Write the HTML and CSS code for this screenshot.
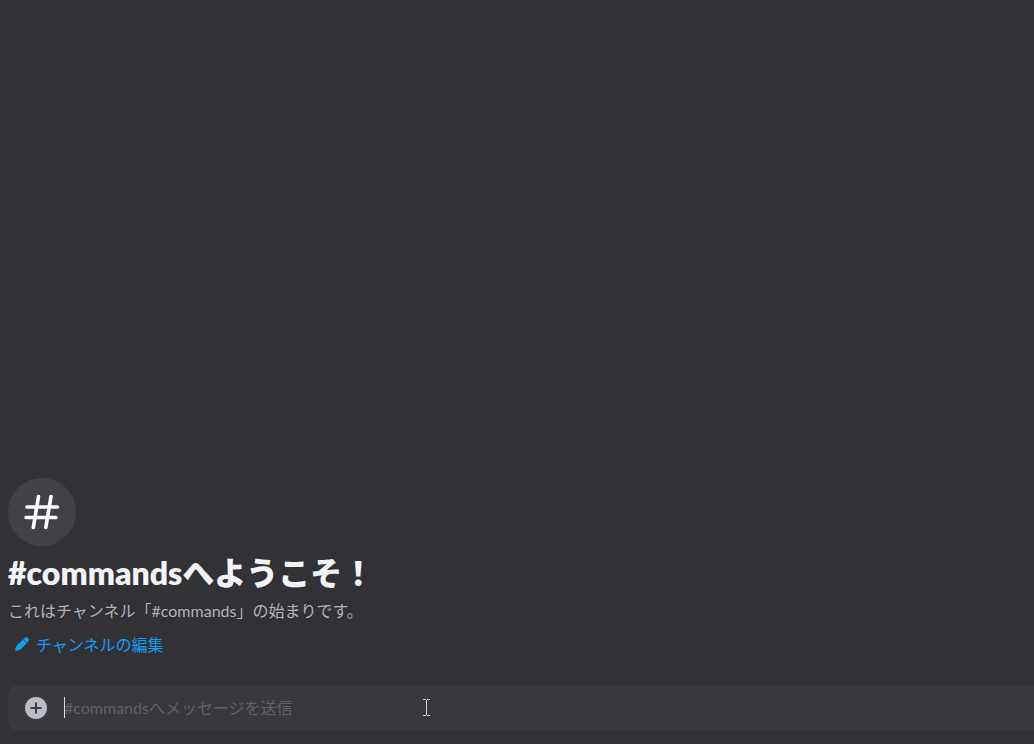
FILE: index.html
```html
<!DOCTYPE html>
<html lang="ja">
<head>
<meta charset="utf-8">
<meta name="viewport" content="width=device-width, initial-scale=1">
<title>#commands</title>
<link rel="stylesheet" href="styles.css">
</head>
<body>
<main class="chat">
  <section class="welcome">
    <div class="channel-icon">
      <svg width="36" height="36" viewBox="0 0 36 36" fill="none" stroke="currentColor" stroke-width="3.6" stroke-linecap="round" aria-hidden="true">
        <path d="M14.5 2.500 9.300 33.500M27 2.500 21.800 33.500M3 13H33.500M2 23.500H32"/>
      </svg>
    </div>
    <h1 class="welcome-title">#commandsへようこそ！</h1>
    <p class="welcome-text">これはチャンネル「#commands」の始まりです。</p>
    <button class="edit-button" type="button">
      <svg width="16" height="16" viewBox="0 0 16 16" fill="currentColor" aria-hidden="true">
        <path d="M9.700 3.200 11 1.900a1.600 1.600 0 0 1 2.300 0l1 1a1.600 1.600 0 0 1 0 2.300L13 6.500zM9 3.700 12.500 7.200 6.800 13Q6 13.800 5 14L2.200 14.700Q1.200 14.900 1.400 13.900L2.100 11.200Q2.300 10.400 2.900 9.800z" stroke="currentColor" stroke-width=".5"/>
      </svg>
      チャンネルの編集
    </button>
  </section>
  <form class="composer">
    <button class="attach-button" type="button" aria-label="追加">
      <svg width="24" height="24" viewBox="0 0 24 24" aria-hidden="true">
        <circle cx="12" cy="12" r="11" fill="#b9bec4"/>
        <path d="M12 6.500V17.500M6.500 12H17.500" stroke="#38393f" stroke-width="2"/>
      </svg>
    </button>
    <div class="field">
      <input class="message-input" type="text" aria-label="メッセージ" placeholder="#commandsへメッセージを送信">
      <span class="caret"></span>
    </div>
    <svg class="pointer" width="9" height="17" viewBox="0 0 9 17" fill="none" stroke="#d2d2d6" shape-rendering="crispEdges" aria-hidden="true">
      <path d="M1 .5H4M5 .5H8M4.500 1V16M1 16.500H4M5 16.500H8"/>
    </svg>
  </form>
</main>
</body>
</html>
```
FILE: styles.css
```css
* {
  box-sizing: border-box;
}

body {
  margin: 0;
  background: #323136;
  color: #f2f3f5;
  font-family: Lato, "Noto Sans CJK JP", sans-serif;
  font-size: 16px;
}

button,
input {
  padding: 0;
  border: 0;
  background: none;
  color: inherit;
  font: inherit;
}

.chat {
  display: flex;
  flex-direction: column;
  justify-content: flex-end;
  min-height: 100vh;
  padding: 0 0 14px 8px;
}

.welcome {
  display: flex;
  flex-direction: column;
  align-items: flex-start;
  margin-bottom: 26px;
}

.channel-icon {
  display: grid;
  place-items: center;
  width: 68px;
  height: 68px;
  border-radius: 50%;
  background: #424148;
  color: #fff;
}

.welcome-title {
  margin: 7px 0 8px;
  font-size: 32px;
  font-weight: 800;
  line-height: 40px;
}

.welcome-text {
  margin: 0;
  color: #b1b3ba;
  line-height: 20px;
}

.edit-button {
  display: flex;
  align-items: center;
  gap: 6px;
  height: 32px;
  margin-top: 7px;
  padding: 0 6px;
  color: #149df2;
}

.composer {
  position: relative;
  display: flex;
  align-items: center;
  gap: 16px;
  height: 44px;
  padding-left: 16px;
  border-radius: 8px 0 0 8px;
  background: #39383e;
}

.attach-button {
  display: flex;
}

.field {
  position: relative;
  display: flex;
  flex: 1;
}

.message-input {
  width: 100%;
  height: 24px;
  padding-bottom: 2px;
  outline: 0;
}

.message-input::placeholder {
  color: #626168;
  opacity: 1;
}

.caret {
  position: absolute;
  top: 1px;
  left: 0;
  width: 1px;
  height: 21px;
  background: #dcdde0;
}

.pointer {
  position: absolute;
  top: 13px;
  left: 414px;
}
```
